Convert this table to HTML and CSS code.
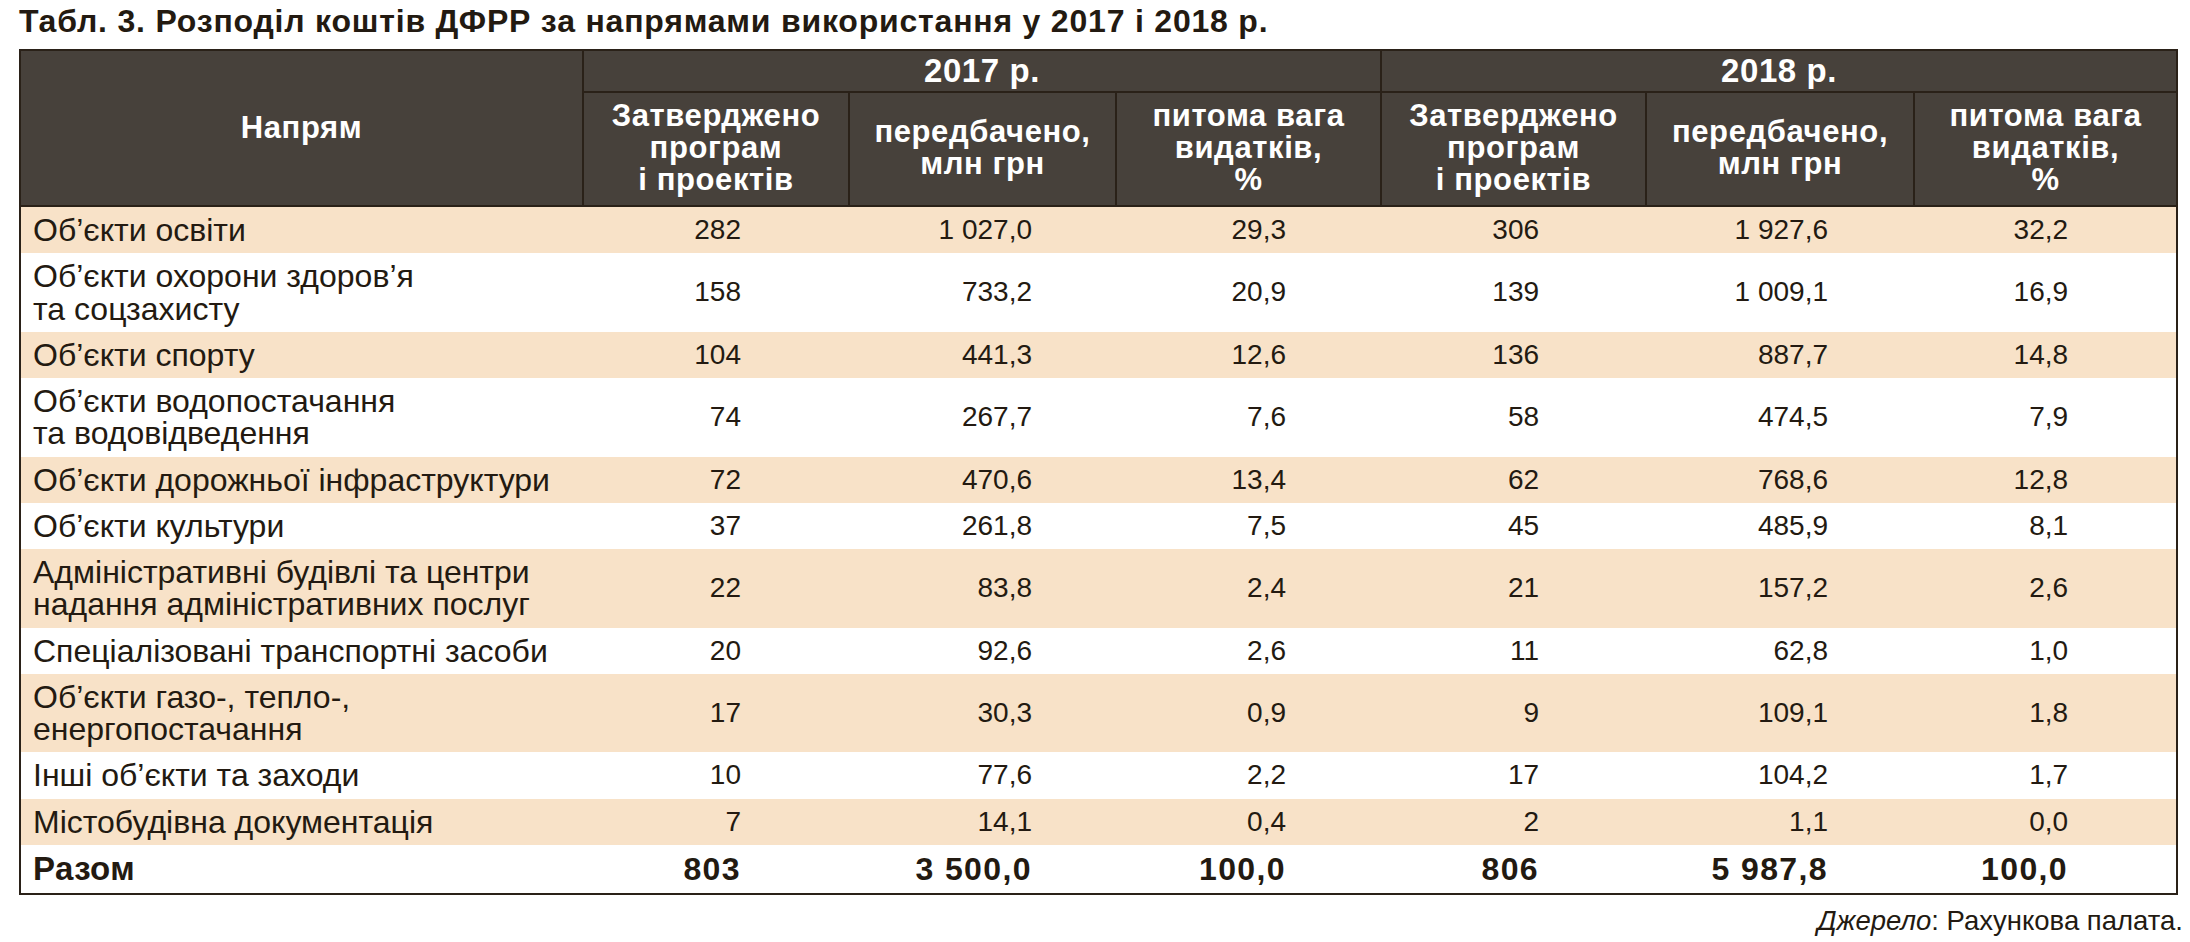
FILE: index.html
```html
<!DOCTYPE html>
<html lang="uk">
<head>
<meta charset="utf-8">
<title>Табл. 3</title>
<link rel="stylesheet" href="styles.css">
</head>
<body>
<div class="page">
  <h1 class="title">Табл. 3. Розподіл коштів ДФРР за напрямами використання у 2017 і 2018 р.</h1>
  <table class="data">
    <colgroup>
      <col class="c-name">
      <col class="c-a"><col class="c-b"><col class="c-c">
      <col class="c-d"><col class="c-e"><col class="c-f">
    </colgroup>
    <thead>
      <tr class="year-row">
        <th rowspan="2" class="h-name">Напрям</th>
        <th colspan="3" class="h-year">2017 р.</th>
        <th colspan="3" class="h-year">2018 р.</th>
      </tr>
      <tr class="sub-row">
        <th>Затверджено<br>програм<br>і проектів</th>
        <th>передбачено,<br>млн грн</th>
        <th>питома вага<br>видатків,<br>%</th>
        <th>Затверджено<br>програм<br>і проектів</th>
        <th>передбачено,<br>млн грн</th>
        <th>питома вага<br>видатків,<br>%</th>
      </tr>
    </thead>
    <tbody>
      <tr class="odd"><td>Об’єкти освіти</td><td class="n1">282</td><td class="n2">1 027,0</td><td class="n3">29,3</td><td class="n4">306</td><td class="n5">1 927,6</td><td class="n6">32,2</td></tr>
      <tr><td>Об’єкти охорони здоров’я<br>та соцзахисту</td><td class="n1">158</td><td class="n2">733,2</td><td class="n3">20,9</td><td class="n4">139</td><td class="n5">1 009,1</td><td class="n6">16,9</td></tr>
      <tr class="odd"><td>Об’єкти спорту</td><td class="n1">104</td><td class="n2">441,3</td><td class="n3">12,6</td><td class="n4">136</td><td class="n5">887,7</td><td class="n6">14,8</td></tr>
      <tr><td>Об’єкти водопостачання<br>та водовідведення</td><td class="n1">74</td><td class="n2">267,7</td><td class="n3">7,6</td><td class="n4">58</td><td class="n5">474,5</td><td class="n6">7,9</td></tr>
      <tr class="odd"><td>Об’єкти дорожньої інфраструктури</td><td class="n1">72</td><td class="n2">470,6</td><td class="n3">13,4</td><td class="n4">62</td><td class="n5">768,6</td><td class="n6">12,8</td></tr>
      <tr><td>Об’єкти культури</td><td class="n1">37</td><td class="n2">261,8</td><td class="n3">7,5</td><td class="n4">45</td><td class="n5">485,9</td><td class="n6">8,1</td></tr>
      <tr class="odd"><td>Адміністративні будівлі та центри<br>надання адміністративних послуг</td><td class="n1">22</td><td class="n2">83,8</td><td class="n3">2,4</td><td class="n4">21</td><td class="n5">157,2</td><td class="n6">2,6</td></tr>
      <tr><td>Спеціалізовані транспортні засоби</td><td class="n1">20</td><td class="n2">92,6</td><td class="n3">2,6</td><td class="n4">11</td><td class="n5">62,8</td><td class="n6">1,0</td></tr>
      <tr class="odd"><td>Об’єкти газо-, тепло-,<br>енергопостачання</td><td class="n1">17</td><td class="n2">30,3</td><td class="n3">0,9</td><td class="n4">9</td><td class="n5">109,1</td><td class="n6">1,8</td></tr>
      <tr><td>Інші об’єкти та заходи</td><td class="n1">10</td><td class="n2">77,6</td><td class="n3">2,2</td><td class="n4">17</td><td class="n5">104,2</td><td class="n6">1,7</td></tr>
      <tr class="odd"><td>Містобудівна документація</td><td class="n1">7</td><td class="n2">14,1</td><td class="n3">0,4</td><td class="n4">2</td><td class="n5">1,1</td><td class="n6">0,0</td></tr>
      <tr class="total"><td>Разом</td><td class="n1">803</td><td class="n2">3 500,0</td><td class="n3">100,0</td><td class="n4">806</td><td class="n5">5 987,8</td><td class="n6">100,0</td></tr>
    </tbody>
  </table>
  <p class="source"><em>Джерело</em>: Рахункова палата.</p>
</div>
</body>
</html>
```

FILE: styles.css
```css
html, body {
  margin: 0;
  padding: 0;
  background: #ffffff;
}

body {
  font-family: "Liberation Sans", Arial, sans-serif;
  color: #231a11;
}

.page {
  width: 2164px;
  padding: 5px 0 0 19px;
}

.title {
  margin: 0 0 11px 0;
  font-size: 32px;
  line-height: 33px;
  letter-spacing: 0.8px;
  font-weight: bold;
  color: #231a11;
  white-space: nowrap;
}

.data {
  width: 2157px;
  table-layout: fixed;
  border-collapse: collapse;
  border: 2px solid #2a2118;
  font-size: 28px;
}

.c-name { width: 563px; }
.c-a { width: 266px; }
.c-b { width: 267px; }
.c-c { width: 265px; }
.c-d { width: 265px; }
.c-e { width: 268px; }
.c-f { width: 263px; }

.data th {
  background: #47413b;
  color: #ffffff;
  font-size: 31px;
  letter-spacing: 0.6px;
  font-weight: bold;
  line-height: 32px;
  text-align: center;
  vertical-align: middle;
  border: 2px solid #2a2118;
  padding: 0;
}

.year-row th.h-year {
  height: 40px;
  font-size: 33px;
  padding-top: 0;
}

.sub-row th {
  height: 110px;
  padding-bottom: 2px;
}

.data td {
  line-height: 32.25px;
  padding: 7px 12px;
  vertical-align: middle;
  white-space: nowrap;
}

.data td:first-child {
  font-size: 32px;
}

.data tbody tr.odd td {
  background: #f8e2c8;
}

.data td.n1 { text-align: right; padding-right: 108px; }
.data td.n2 { text-align: right; padding-right: 84px; }
.data td.n3 { text-align: right; padding-right: 95px; }
.data td.n4 { text-align: right; padding-right: 107px; }
.data td.n5 { text-align: right; padding-right: 86px; }
.data td.n6 { text-align: right; padding-right: 108px; }

.data tr.total td {
  font-weight: bold;
  font-size: 32px;
  letter-spacing: 1.4px;
  padding-top: 8px;
  padding-bottom: 8px;
}

.data tr.total td:first-child {
  font-size: 33px;
  letter-spacing: 0.4px;
}

.source {
  margin: 11px 0 0 0;
  text-align: right;
  font-size: 27.5px;
  line-height: 30px;
  color: #231a11;
}
```
